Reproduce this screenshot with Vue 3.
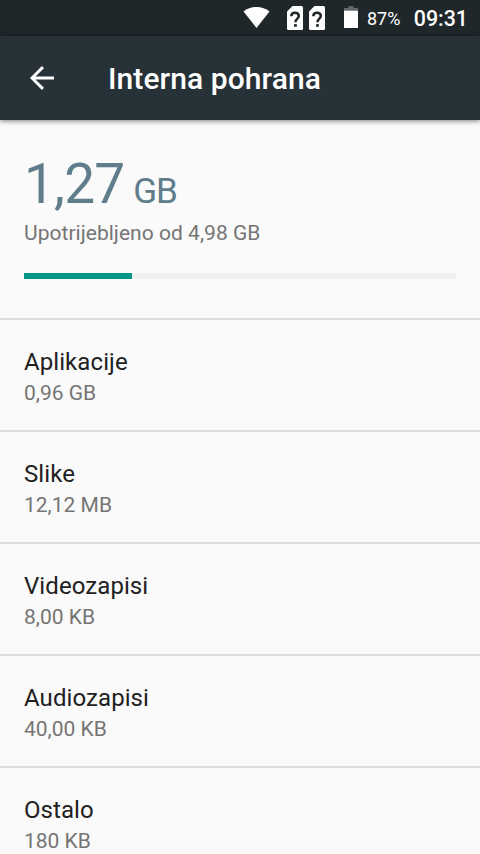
<script setup>
const items = [
  { name: 'Aplikacije', size: '0,96 GB' },
  { name: 'Slike', size: '12,12 MB' },
  { name: 'Videozapisi', size: '8,00 KB' },
  { name: 'Audiozapisi', size: '40,00 KB' },
  { name: 'Ostalo', size: '180 KB' },
]
const used = 25
</script>

<template>
  <div class="screen">
    <div class="status">
      <svg class="wifi" width="28" height="22" viewBox="0 0 28 22"><path d="M13.500 22 .5 5.500C4 2.500 8.500 1 13.500 1s9.500 1.500 13 4.500Z" fill="#fff" /></svg>
      <svg v-for="n in 2" :key="n" class="sim" width="16" height="24" viewBox="0 0 16 24">
        <path d="M5.500 0H14.500A1.500 1.500 0 0 1 16 1.500V22.500a1.500 1.500 0 0 1-1.500 1.500H1.500A1.500 1.500 0 0 1 0 22.500V5.500Z" fill="#fff" />
        <path d="M4.300 10.200C4.300 8 5.800 6.700 8 6.700S11.800 8 11.800 10.100C11.800 12.600 8.400 12.800 8.400 16.300" fill="none" stroke="#20272a" stroke-width="2.500" />
        <path d="M7.100 18.100h2.700v2.700H7.100z" fill="#20272a" />
      </svg>
      <svg class="battery" width="14" height="22" viewBox="0 0 14 22"><path d="M4.500 0h5v2H14v3H0V2h4.500Z" fill="#61676a" /><path d="M0 4.700h14v17.300H0z" fill="#fff" /></svg>
      <span class="pct">87%</span>
      <span class="clock">09:31</span>
    </div>
    <header class="bar">
      <svg width="24" height="24" viewBox="0 0 24 24"><path d="M24 10.600H5.500L14 2.200 11.900 .1 0 12 11.900 23.900 14 21.800 5.500 13.400H24Z" fill="#fff" /></svg>
      <h1>Interna pohrana</h1>
    </header>
    <section class="summary">
      <div class="total"><span class="num">1,27</span><span class="unit">GB</span></div>
      <div class="of">Upotrijebljeno od 4,98 GB</div>
      <div class="track"><div class="fill" :style="{ width: used + '%' }"></div></div>
    </section>
    <div v-for="i in items" :key="i.name" class="item">
      <div class="name">{{ i.name }}</div>
      <div class="size">{{ i.size }}</div>
    </div>
  </div>
</template>

<style>
body { margin: 0; overflow: hidden; }
</style>
<style scoped>
.screen { width: 480px; height: 854px; overflow: hidden; background: #fafafa; font-family: Roboto, sans-serif; }
.status { height: 36px; box-sizing: border-box; background: #20272a; color: #fff; display: flex; align-items: flex-start; padding: 6px 12px 0 243px; }
.status svg { flex: none; }
.sim { margin-left: 6px; }
.wifi + .sim { margin-left: 16px; }
.battery { margin-left: 19px; }
.pct { font-size: 18px; line-height: 26px; margin-left: 9px; }
.clock { font-size: 21.4px; line-height: 26px; font-weight: 500; margin-left: auto; }
.bar { height: 84px; box-sizing: border-box; padding-left: 30px; display: flex; align-items: center; gap: 54px; background: #263238; color: #fff; box-shadow: 0 1px 5px rgba(0,0,0,.5); position: relative; }
h1 { margin: 0; padding-top: 2px; font-size: 30px; font-weight: 500; line-height: 36px; letter-spacing: .07px; }
.summary { height: 198px; box-sizing: border-box; padding: 31px 24px 0; }
.total { display: flex; align-items: baseline; gap: 10px; height: 66px; line-height: 66px; color: #607d8b; }
.num { font-size: 55px; letter-spacing: -.8px; }
.unit { font-size: 35px; letter-spacing: -1.200px; margin-left: -1px; }
.of { font-size: 21px; line-height: 30px; margin-top: 1px; color: #757575; letter-spacing: .03px; }
.track { height: 6px; margin-top: 25px; background: #f0f0f0; }
.fill { height: 6px; background: #009688; }
.item { height: 112px; box-sizing: border-box; border-top: 2px solid #dcdcdc; padding: 26px 24px 0; }
.name { font-size: 24px; line-height: 32px; color: #212121; letter-spacing: .08px; }
.size { font-size: 21px; line-height: 30px; color: #757575; }
</style>
